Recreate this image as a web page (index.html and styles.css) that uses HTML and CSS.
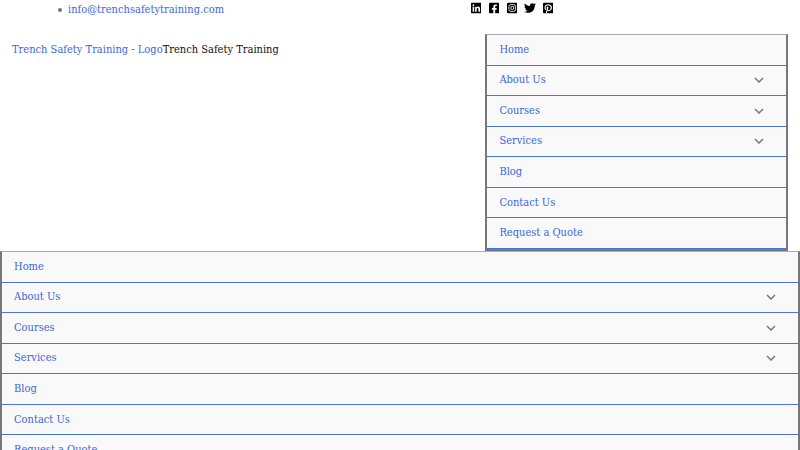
FILE: index.html
```
<!DOCTYPE html>
<html lang="en-US">
<head>
    <meta charset="UTF-8">
    <meta name="viewport" content="width=device-width, initial-scale=1.0">
    <link rel="stylesheet" href="styles.css">
    <title>Trench Safety Training</title>
</head>
<body>
    <header>
        <div class="top-bar">
            <ul class="contact-list">
                <li><a href="mailto:info@trenchsafetytraining.com">info@trenchsafetytraining.com</a></li>
            </ul>
            <div class="social-links">
                <a href="#" aria-label="LinkedIn"><svg viewBox="0 0 448 512"><path d="M416 32H31.9C14.3 32 0 46.500 0 64.300v383.400C0 465.500 14.300 480 31.900 480H416c17.600 0 32-14.500 32-32.300V64.300c0-17.800-14.400-32.300-32-32.300zM135.400 416H69V202.200h66.500V416zm-33.200-243c-21.300 0-38.500-17.300-38.500-38.500S80.900 96 102.200 96c21.200 0 38.500 17.300 38.500 38.500 0 21.300-17.200 38.500-38.500 38.500zm282.100 243h-66.400V312c0-24.800-.5-56.700-34.500-56.700-34.600 0-39.900 27-39.900 54.900V416h-66.400V202.200h63.700v29.200h.9c8.900-16.800 30.600-34.500 62.900-34.500 67.200 0 79.700 44.300 79.700 101.900V416z"/></svg></a>
                <a href="#" aria-label="Facebook"><svg viewBox="0 0 448 512"><path d="M400 32H48A48 48 0 0 0 0 80v352a48 48 0 0 0 48 48h137.250V327.690h-63V256h63v-54.640c0-62.150 37-96.480 93.670-96.480 27.140 0 55.520 4.840 55.520 4.840v61h-31.270c-30.810 0-40.420 19.120-40.420 38.730V256h68.780l-11 71.690h-57.780V480H400a48 48 0 0 0 48-48V80a48 48 0 0 0-48-48z"/></svg></a>
                <a href="#" aria-label="Instagram"><svg viewBox="0 0 448 512"><rect y="32" width="448" height="448" rx="48"/><rect class="line" x="82" y="114" width="284" height="284" rx="78"/><circle class="line" cx="224" cy="256" r="66"/><circle class="dot" cx="300" cy="180" r="18"/></svg></a>
                <a href="#" aria-label="Twitter"><svg viewBox="0 0 512 512"><path d="M459.370 151.716c.325 4.548.325 9.097.325 13.645 0 138.720-105.583 298.558-298.558 298.558-59.452 0-114.680-17.219-161.137-47.106 8.447.974 16.568 1.299 25.340 1.299 49.055 0 94.213-16.568 130.274-44.832-46.132-.975-84.792-31.188-98.112-72.772 6.498.974 12.995 1.624 19.818 1.624 9.421 0 18.843-1.300 27.614-3.573-48.081-9.747-84.143-51.980-84.143-102.985v-1.299c13.969 7.797 30.214 12.670 47.431 13.319-28.264-18.843-46.781-51.005-46.781-87.391 0-19.492 5.197-37.360 14.294-52.954 51.655 63.675 129.300 105.258 216.365 109.807-1.624-7.797-2.599-15.918-2.599-24.040 0-57.828 46.782-104.934 104.934-104.934 30.213 0 57.502 12.670 76.670 33.137 23.715-4.548 46.456-13.320 66.599-25.340-7.798 24.366-24.366 44.833-46.132 57.827 21.117-2.273 41.584-8.122 60.426-16.243-14.292 20.791-32.161 39.308-52.628 54.253z"/></svg></a>
                <a href="#" aria-label="Pinterest"><svg viewBox="0 0 448 512"><path d="M448 80v352c0 26.500-21.500 48-48 48H154.400c9.800-16.400 22.400-40 27.400-59.300 3-11.500 15.300-58.400 15.300-58.400 8 15.300 31.400 28.200 56.300 28.200 74.100 0 127.400-68.100 127.400-152.700 0-81.100-66.200-141.800-151.400-141.800-106 0-162.200 71.100-162.200 148.600 0 36 19.200 80.800 49.800 95.100 4.700 2.200 7.100 1.200 8.200-3.300.8-3.400 5-20.100 6.800-27.800.6-2.500.3-4.600-1.700-7-10.100-12.300-18.300-34.900-18.300-56 0-54.200 41-106.600 110.900-106.600 60.300 0 102.600 41.100 102.600 99.900 0 66.400-33.500 112.400-77.200 112.400-24.100 0-42.100-19.900-36.400-44.400 6.900-29.200 20.300-60.700 20.300-81.800 0-53-75.500-45.700-75.500 25 0 21.700 7.300 36.500 7.300 36.500-31.400 132.800-36.100 134.500-29.600 192.600l2.200.8H48c-26.500 0-48-21.500-48-48V80c0-26.500 21.500-48 48-48h352c26.500 0 48 21.500 48 48z"/></svg></a>
            </div>
        </div>

        <div class="main-header">
            <div class="branding"><a href="#">Trench Safety Training - Logo</a><span>Trench Safety Training</span></div>
            <nav class="menu" aria-label="Primary">
                <div class="menu-item"><a href="#">Home</a></div>
                <div class="menu-item"><a href="#">About Us</a><button type="button" aria-label="Toggle About Us menu"><svg viewBox="0 0 10 6"><path d="M1 1l4 4 4-4"/></svg></button></div>
                <div class="menu-item"><a href="#">Courses</a><button type="button" aria-label="Toggle Courses menu"><svg viewBox="0 0 10 6"><path d="M1 1l4 4 4-4"/></svg></button></div>
                <div class="menu-item"><a href="#">Services</a><button type="button" aria-label="Toggle Services menu"><svg viewBox="0 0 10 6"><path d="M1 1l4 4 4-4"/></svg></button></div>
                <div class="menu-item"><a href="#">Blog</a></div>
                <div class="menu-item"><a href="#">Contact Us</a></div>
                <div class="menu-item"><a href="#">Request a Quote</a></div>
            </nav>
        </div>
    </header>

    <!-- Mobile menu -->
    <nav class="menu" aria-label="Mobile">
        <div class="menu-item"><a href="#">Home</a></div>
        <div class="menu-item"><a href="#">About Us</a><button type="button" aria-label="Toggle About Us menu"><svg viewBox="0 0 10 6"><path d="M1 1l4 4 4-4"/></svg></button></div>
        <div class="menu-item"><a href="#">Courses</a><button type="button" aria-label="Toggle Courses menu"><svg viewBox="0 0 10 6"><path d="M1 1l4 4 4-4"/></svg></button></div>
        <div class="menu-item"><a href="#">Services</a><button type="button" aria-label="Toggle Services menu"><svg viewBox="0 0 10 6"><path d="M1 1l4 4 4-4"/></svg></button></div>
        <div class="menu-item"><a href="#">Blog</a></div>
        <div class="menu-item"><a href="#">Contact Us</a></div>
        <div class="menu-item"><a href="#">Request a Quote</a></div>
    </nav>
</body>
</html>
```
FILE: styles.css
```
* {box-sizing: border-box;}

body {
    margin: 0;
    background-color: white;
    color: #111;
    font-family: "DejaVu Serif Condensed", "DejaVu Serif", serif;
    font-size: 11px;
    line-height: 18px;
    scrollbar-width: none;
}

a {
    color: #3a66e0;
    text-decoration: none;
}

/* Email and social icons */
.top-bar {
    display: grid;
    grid-template-columns: 1fr 1fr;
    padding: 0 12px;
}

.contact-list {
    margin: 0;
    padding-left: 46px;
    list-style: none;
    line-height: 19px;
}

.contact-list li {
    display: flex;
    align-items: center;
    gap: 6px;
}

.contact-list li::before {
    content: "";
    width: 4px;
    height: 4px;
    border-radius: 50%;
    background-color: #777;
}

.social-links {
    display: flex;
    gap: 6px;
    padding-left: 70px;
}

.social-links a {
    display: flex;
    align-items: center;
    justify-content: center;
    width: 12px;
    height: 16px;
}

.social-links svg {
    height: 12px;
    fill: black;
}

.social-links .line {
    fill: none;
    stroke: white;
    stroke-width: 36;
}

.social-links .dot {
    fill: white;
}

/* Logo and primary menu */
.main-header {
    display: flex;
    justify-content: space-between;
    padding: 15px 12px 0;
}

.branding {
    padding-top: 7px;
}

.main-header .menu {
    width: 39%;
}

.menu {
    display: grid;
    grid-auto-rows: 1fr;
    min-height: 217px;
    background-color: #f9f9f9;
    border: 2px solid #77787c;
    border-top: 1px solid #aaa;
}

.menu-item {
    display: flex;
    align-items: center;
    justify-content: space-between;
    padding: 0 22px 0 12px;
    border-bottom: 1px solid #4a74e2;
}

/* Submenu toggle */
.menu button {
    display: flex;
    padding: 0;
    border: none;
    background: none;
    cursor: pointer;
}

.menu button svg {
    width: 10px;
    fill: none;
    stroke: #777;
    stroke-width: 1.500;
}
```
